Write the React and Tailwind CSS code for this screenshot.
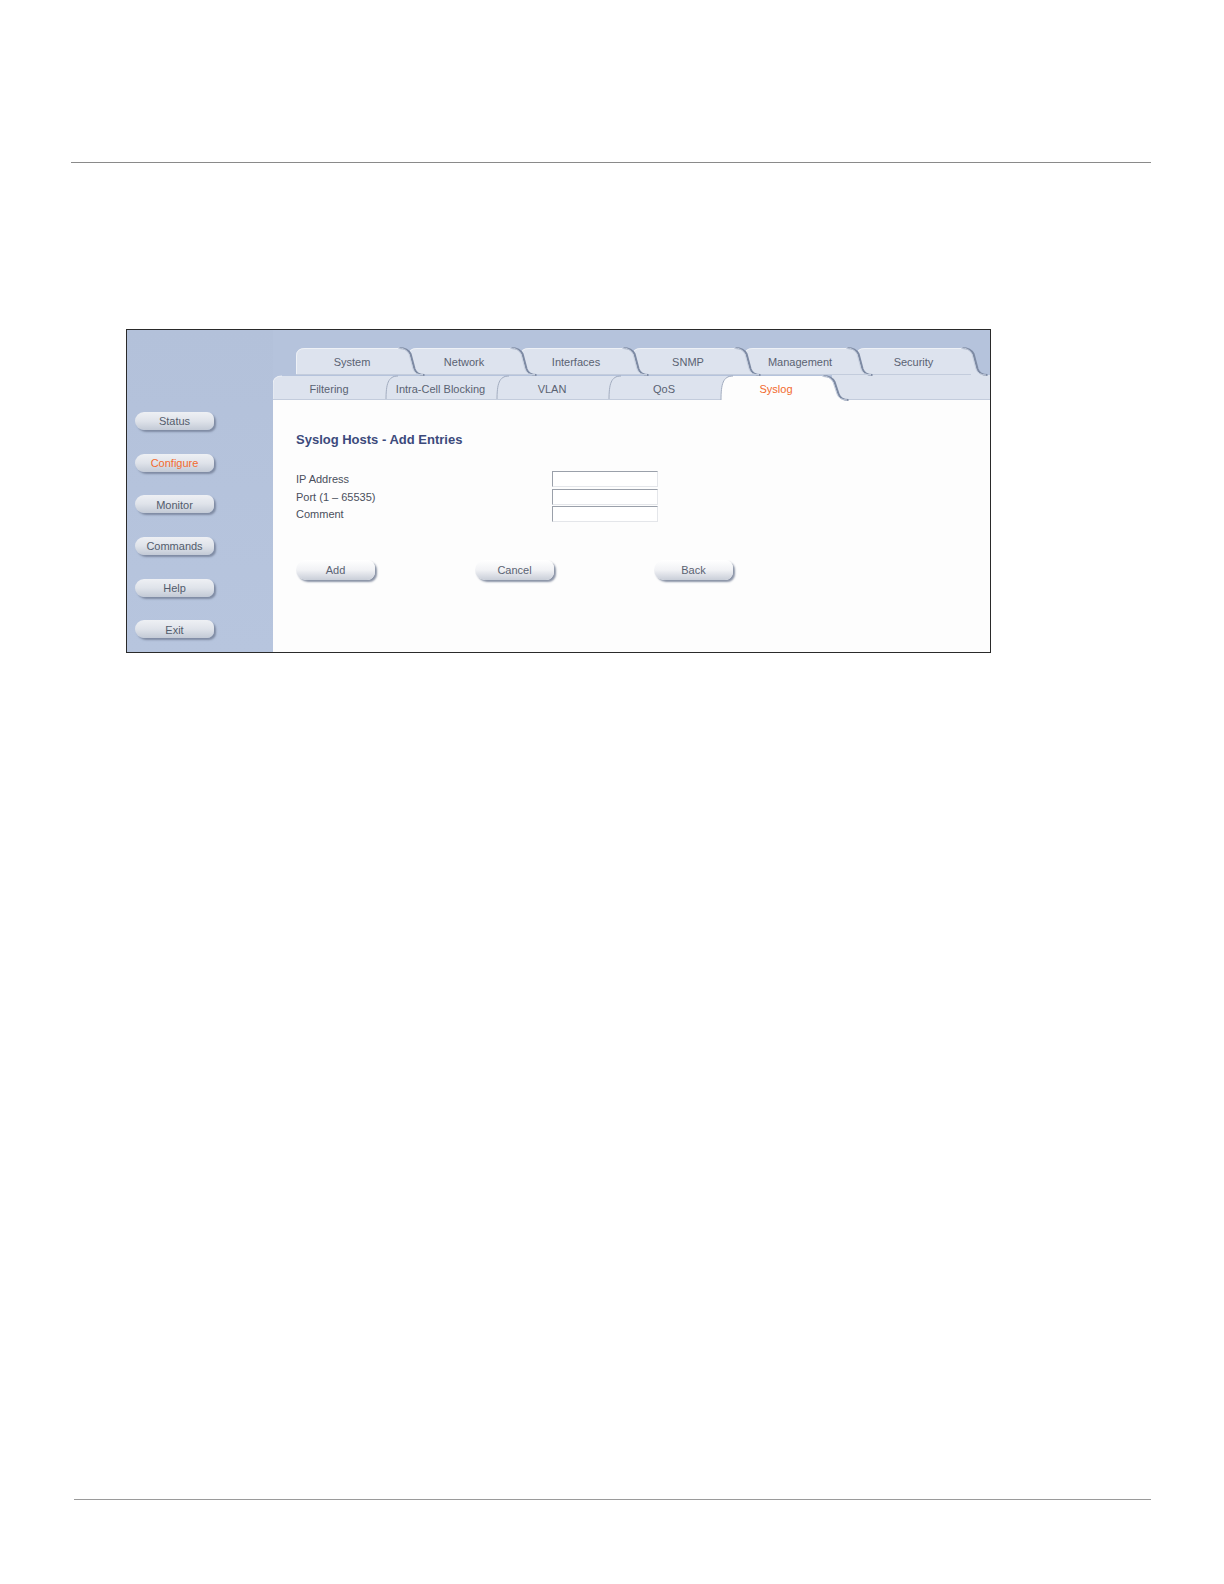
import React from "react";

const TAB_FILL = "#dde3ee";
const BLUE = "#b5c3dc";

function Tab({ label, width, height, z, last }) {
  const w = width;
  const h = height;
  const shape = `M0,${h} L0,9 Q0,1 9,1 L${w - 10},1 Q${w - 2},1 ${w + 1},7 L${w + 5},${h - 6} Q${w + 7},${h} ${w + 15},${h} Z`;
  const curve = `M${w - 10},1 Q${w - 2},1 ${w + 1},7 L${w + 5},${h - 6} Q${w + 7},${h} ${w + 15},${h}`;
  return (
    <div className="relative shrink-0" style={{ width: w, height: h, zIndex: z }}>
      <svg
        className="absolute left-0 top-0 overflow-visible"
        width={w + 16}
        height={h}
        viewBox={`0 0 ${w + 16} ${h}`}
      >
        <path d={shape} fill={TAB_FILL} />
        <path d={`M0.5,${h} L0.5,9 Q0.5,1.5 9,1.5 L${w - 10},1.5`} fill="none" stroke="#eef1f6" strokeWidth="1" />
        <path d={curve} fill="none" stroke="#7d8aa3" strokeWidth="2.2" transform="translate(1.5,0)" />
        <path d={curve} fill="none" stroke="#c9d1e0" strokeWidth="1" />
        <line x1="0" y1={h - 0.5} x2={w + (last ? 0 : 15)} y2={h - 0.5} stroke="#c3ccdc" />
      </svg>
      <span className="relative flex h-full items-center justify-center pt-[3px] text-[11px] text-[#5a6272]">
        {label}
      </span>
    </div>
  );
}

function SubTab({ label, width, height, active, z, first }) {
  const w = width;
  const h = height;
  const left = first
    ? `M0,${h} L0,9 Q0,1 9,1`
    : `M1,${h} C1,9 3,1 13,1`;
  const right = `M${w - 10},1 Q${w - 2},1 ${w + 1},7 L${w + 5},${h - 6} Q${w + 7},${h} ${w + 15},${h}`;
  const shape = active
    ? `${left} L${w - 10},1 Q${w - 2},1 ${w + 1},7 L${w + 5},${h - 6} Q${w + 7},${h} ${w + 15},${h} Z`
    : `${left} L${w + 8},1 L${w + 8},${h} Z`;
  return (
    <div className="relative shrink-0" style={{ width: w, height: h, zIndex: z }}>
      <svg
        className="absolute left-0 top-0 overflow-visible"
        width={w + 16}
        height={h}
        viewBox={`0 0 ${w + 16} ${h}`}
      >
        <path d={shape} fill={active ? "#fdfdfd" : TAB_FILL} />
        <path d={left} fill="none" stroke={first ? "#eef1f6" : "#a3adc0"} strokeWidth="1" />
        {active && (
          <>
            <path d={right} fill="none" stroke="#7d8aa3" strokeWidth="2.2" transform="translate(1.5,0)" />
            <path d={right} fill="none" stroke="#c9d1e0" strokeWidth="1" />
          </>
        )}
        {!active && <line x1="0" y1={h - 0.5} x2={w + 8} y2={h - 0.5} stroke="#c3ccdc" />}
      </svg>
      <span
        className={`relative flex h-full items-center justify-center pt-[3px] text-[11px] ${active ? "text-[#f26a2e]" : "text-[#5a6272]"}`}
      >
        {label}
      </span>
    </div>
  );
}

function SideButton({ label, active }) {
  return (
    <div className="flex h-[41.7px] items-start pl-[8px]">
      <div
        className={`flex h-[18px] w-[79px] items-center justify-center rounded-l-[9px] rounded-r-[7px] bg-gradient-to-b from-[#eef0f4] via-[#dfe3ea] to-[#c3cad6] pt-px text-[11px] shadow-[2px_2px_2px_#7f8ba3] ${active ? "text-[#f26a2e]" : "text-[#535c6c]"}`}
      >
        {label}
      </div>
    </div>
  );
}

function FormButton({ label }) {
  return (
    <div className="flex h-[20px] w-[79px] items-center justify-center rounded-l-[10px] rounded-r-[8px] bg-gradient-to-b from-[#ffffff] via-[#f1f2f5] to-[#c9ced8] text-[11px] text-[#5a6272] shadow-[2px_2px_2px_#8a93a6]">
      {label}
    </div>
  );
}

function Field({ label }) {
  return (
    <div className="flex h-[17.6px] items-center">
      <span className="w-[256px] text-[11px] text-[#4a4f5c]">{label}</span>
      <div className="h-[16px] w-[106px] border border-t-[#9aa0aa] border-l-[#9aa0aa] border-r-[#e4e6ea] border-b-[#e4e6ea] bg-white" />
    </div>
  );
}

export default function App() {
  const top = ["System", "Network", "Interfaces", "SNMP", "Management", "Security"];
  const second = ["Filtering", "Intra-Cell Blocking", "VLAN", "QoS", "Syslog"];
  const side = ["Status", "Configure", "Monitor", "Commands", "Help", "Exit"];

  return (
    <div className="h-[1584px] w-full overflow-hidden bg-white pt-[162px] font-['Liberation_Sans',Arial,sans-serif]">
      <div className="ml-[71px] h-px w-[1080px] bg-[#8a8a8a]" />

      <div className="ml-[126px] mt-[166px] flex h-[324px] w-[865px] border border-[#2a2a2a]" style={{ background: BLUE }}>
        <div className="w-[146px] shrink-0 bg-gradient-to-b from-[#b3c1da] to-[#b7c5de] pt-[82px]">
          {side.map((s) => (
            <SideButton key={s} label={s} active={s === "Configure"} />
          ))}
        </div>

        <div className="flex min-w-0 flex-1 flex-col overflow-hidden">
          <div className="h-[17px] shrink-0" />
          <div className="flex h-[28px] shrink-0 pl-[23px]">
            {top.map((t, i) => (
              <Tab key={t} label={t} width={i === 5 ? 115 : 112} height={28} z={10 - i} last={i === 5} />
            ))}
          </div>
          <div className="flex h-[25px] shrink-0">
            {second.map((t, i) => (
              <SubTab
                key={t}
                label={t}
                width={i === 1 ? 111 : 112}
                height={25}
                first={i === 0}
                z={t === "Syslog" ? 20 : i + 1}
                active={t === "Syslog"}
              />
            ))}
            <div className="flex-1 border-b border-[#c3ccdc]" style={{ background: TAB_FILL }} />
          </div>

          <div className="flex-1 bg-[#fdfdfd] pl-[23px] pt-[30px]">
            <h1 className="text-[13px] font-bold text-[#3c4a7b]">Syslog Hosts - Add Entries</h1>
            <div className="mt-[21px] flex flex-col">
              <Field label="IP Address" />
              <Field label="Port (1 – 65535)" />
              <Field label="Comment" />
            </div>
            <div className="mt-[37px] flex gap-[100px]">
              <FormButton label="Add" />
              <FormButton label="Cancel" />
              <FormButton label="Back" />
            </div>
          </div>
        </div>
      </div>

      <div className="ml-[74px] mt-[846px] h-px w-[1077px] bg-[#9a9a9a]" />
    </div>
  );
}
